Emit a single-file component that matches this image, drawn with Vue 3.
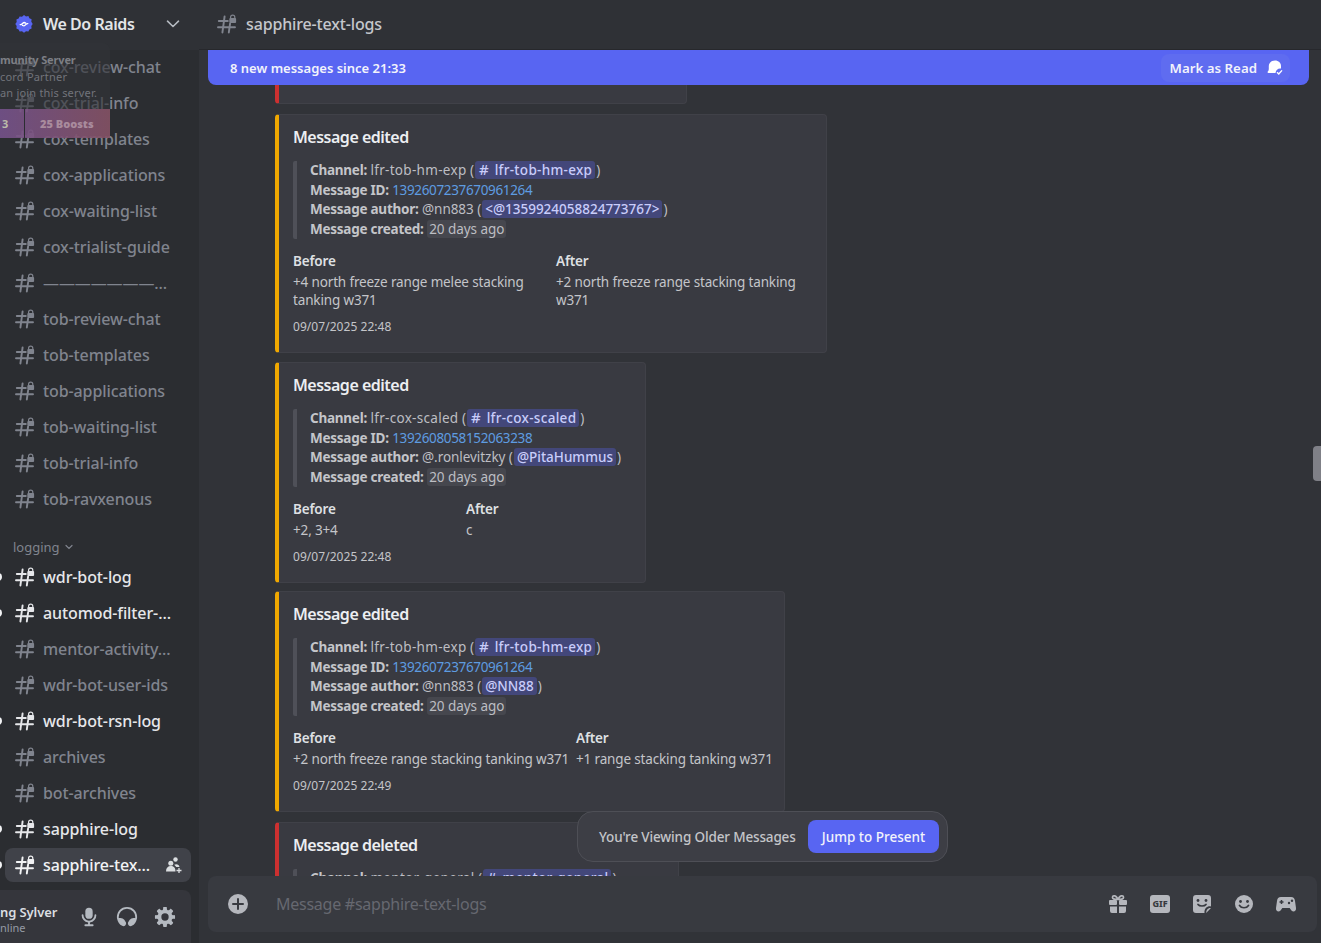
<script setup>
const channels = [
  { name: 'cox-review-chat' }, { name: 'cox-trial-info' }, { name: 'cox-templates' },
  { name: 'cox-applications' }, { name: 'cox-waiting-list' }, { name: 'cox-trialist-guide' },
  { name: '———————...' }, { name: 'tob-review-chat' }, { name: 'tob-templates' },
  { name: 'tob-applications' }, { name: 'tob-waiting-list' }, { name: 'tob-trial-info' },
  { name: 'tob-ravxenous' },
]
const logging = [
  { name: 'wdr-bot-log', unread: true },
  { name: 'automod-filter-...', unread: true },
  { name: 'mentor-activity...' },
  { name: 'wdr-bot-user-ids' },
  { name: 'wdr-bot-rsn-log', unread: true },
  { name: 'archives' },
  { name: 'bot-archives' },
  { name: 'sapphire-log', unread: true },
  { name: 'sapphire-tex...', unread: true, active: true },
]
const cards = [
  {
    gap: 10, width: 552, col: 263, channel: 'lfr-tob-hm-exp', id: '1392607237670961264', author: '@nn883',
    mention: '<@1359924058824773767>', before: '+4 north freeze range melee stacking tanking w371',
    after: '+2 north freeze range stacking tanking w371', time: '09/07/2025 22:48',
  },
  {
    gap: 9, width: 371, col: 173, channel: 'lfr-cox-scaled', id: '1392608058152063238', author: '@.ronlevitzky',
    mention: '@PitaHummus', before: '+2, 3+4', after: 'c', time: '09/07/2025 22:48',
  },
  {
    gap: 8, width: 510, col: 283, channel: 'lfr-tob-hm-exp', id: '1392607237670961264', author: '@nn883',
    mention: '@NN88', before: '+2 north freeze range stacking tanking w371',
    after: '+1 range stacking tanking w371', time: '09/07/2025 22:49',
  },
]
</script>

<template>
  <svg class="defs" width="0" height="0" aria-hidden="true">
    <symbol id="lockhash" viewBox="0 0 24 24">
      <path d="M9.600 4.500 7.400 20.500M15.100 11.500 13.800 20.500M3.800 9H12.800M3 15.300H20" fill="none" stroke="currentColor" stroke-width="1.900" stroke-linecap="round" />
      <path d="M15.600 6.500V5.300a2.100 2.100 0 0 1 4.200 0v1.200" fill="none" stroke="currentColor" stroke-width="1.200" />
      <rect x="14.300" y="6" width="6.800" height="5" rx="1" fill="currentColor" />
    </symbol>
  </svg>

  <div class="app">
    <aside class="side">
      <header class="guild">
        <svg class="badge" width="18" height="18" viewBox="0 0 18 18">
          <path fill="#5865f2" d="M9 0l2 1.400 2.400-.3 1 2.200 2.200 1-.3 2.400L17.700 9l-1.400 2 .3 2.400-2.200 1-1 2.200-2.400-.3L9 17.700l-2-1.400-2.400.3-1-2.200-2.200-1 .3-2.400L.3 9l1.400-2-.3-2.400 2.200-1 1-2.200 2.400.3z" />
          <path d="M5.200 9.600c1.500.6 2.600-2 4-2.100 1 0 1.200.5 1.400.6M7.400 10.300c.6.300 1 .6 1.600.5 1.400-.2 2.400-2.600 3.800-2.200" fill="none" stroke="#fff" stroke-width="1.300" stroke-linecap="round" />
        </svg>
        <span class="guild-name">We Do Raids</span>
        <svg class="chev" width="14" height="14" viewBox="0 0 14 14"><path d="M1.500 4.200 7 9.500l5.500-5.300" fill="none" stroke="currentColor" stroke-width="1.600" stroke-linecap="round" stroke-linejoin="round" /></svg>
      </header>

      <nav class="list">
        <div v-for="c in channels" :key="c.name" class="chan">
          <svg class="hash" width="24" height="24"><use href="#lockhash" /></svg>
          <span>{{ c.name }}</span>
        </div>
        <div class="cat">logging
          <svg width="10" height="10" viewBox="0 0 10 10"><path d="M2 3.500 5 6.500l3-3" fill="none" stroke="currentColor" stroke-width="1.200" stroke-linecap="round" /></svg>
        </div>
        <div v-for="c in logging" :key="c.name" class="chan" :class="{ unread: c.unread, active: c.active }">
          <i v-if="c.unread" class="pip"></i>
          <svg class="hash" width="24" height="24"><use href="#lockhash" /></svg>
          <span class="grow">{{ c.name }}</span>
          <svg v-if="c.active" class="invite" width="18" height="18" viewBox="0 0 18 18">
            <circle cx="10.500" cy="3.500" r="2.200" fill="currentColor" />
            <circle cx="5.800" cy="7.300" r="2.500" fill="currentColor" />
            <path fill="currentColor" d="M1 15.500c0-3.500 2-5.400 4.800-5.400s4.700 1.600 4.700 5.400zM9.200 8.800c2.400-1.300 5-.3 5.300 2.200h-3.200z" />
            <path d="M14 12v5M11.500 14.500h5" stroke="currentColor" stroke-width="1.300" />
          </svg>
        </div>
      </nav>

      <div class="user">
        <div class="who">
          <b>ng Sylver</b>
          <small>nline</small>
        </div>
        <svg class="ctl" width="22" height="22" viewBox="0 0 24 24"><path fill="currentColor" d="M12 2a4 4 0 0 0-4 4v4a4 4 0 0 0 8 0V6a4 4 0 0 0-4-4Z" /><path fill="currentColor" d="M6 10a1 1 0 0 0-2 0 8 8 0 0 0 7 7.930V20H8a1 1 0 1 0 0 2h8a1 1 0 1 0 0-2h-3v-2.070A8 8 0 0 0 20 10a1 1 0 1 0-2 0 6 6 0 0 1-12 0Z" /></svg>
        <svg class="ctl" width="22" height="22" viewBox="0 0 24 24"><path fill="currentColor" d="M12 3a9 9 0 0 0-8.950 10h1.870a5 5 0 0 1 4.100 2.130l1.370 1.970a3.100 3.100 0 0 1-.17 3.780 2.850 2.850 0 0 1-3.550.74 11 11 0 1 1 10.660 0c-1.270.71-2.730.23-3.550-.74a3.100 3.100 0 0 1-.17-3.780l1.380-1.970a5 5 0 0 1 4.100-2.130h1.860A9 9 0 0 0 12 3Z" /></svg>
        <svg class="ctl" width="22" height="22" viewBox="0 0 24 24"><path fill="currentColor" fill-rule="evenodd" d="M10.560 1.100c-.46.05-.7.53-.64.98.18 1.160-.19 2.200-.98 2.530-.8.33-1.790-.15-2.490-1.100-.27-.36-.78-.52-1.140-.24-.77.59-1.450 1.270-2.040 2.040-.28.36-.12.87.24 1.140.96.7 1.430 1.700 1.100 2.490-.33.8-1.370 1.160-2.530.98-.45-.07-.93.18-.99.64a11.100 11.100 0 0 0 0 2.880c.06.46.54.7.99.64 1.160-.18 2.200.19 2.530.98.33.8-.14 1.790-1.100 2.490-.36.27-.52.78-.24 1.140.59.77 1.270 1.450 2.040 2.040.36.28.87.12 1.140-.24.7-.95 1.700-1.430 2.490-1.100.8.33 1.160 1.370.98 2.530-.07.45.18.93.64.99a11.100 11.100 0 0 0 2.880 0c.46-.06.7-.54.64-.99-.18-1.160.19-2.200.98-2.530.8-.33 1.790.14 2.490 1.100.27.36.78.52 1.140.24.77-.59 1.450-1.270 2.040-2.040.28-.36.12-.87-.24-1.140-.96-.7-1.430-1.700-1.100-2.490.33-.8 1.370-1.160 2.530-.98.45.07.93-.18.99-.64a11.100 11.100 0 0 0 0-2.880c-.06-.46-.54-.7-.99-.64-1.160.18-2.200-.19-2.530-.98-.33-.8.14-1.790 1.100-2.490.36-.27.52-.78.24-1.140a11.070 11.070 0 0 0-2.040-2.040c-.36-.28-.87-.12-1.140.24-.7.96-1.700 1.430-2.490 1.100-.8-.33-1.160-1.370-.98-2.530.07-.45-.18-.93-.64-.99a11.100 11.100 0 0 0-2.880 0ZM16 12a4 4 0 1 1-8 0 4 4 0 0 1 8 0Z" /></svg>
      </div>

      <div class="pop">
        <div class="pop-text">
          <b>munity Server</b>
          <span>cord Partner</span>
          <span>an join this server.</span>
        </div>
        <div class="boost"><span class="lvl">3</span><b>25 Boosts</b></div>
      </div>
    </aside>

    <main class="main">
      <header class="top">
        <svg class="top-hash" width="24" height="24"><use href="#lockhash" /></svg>
        <span>sapphire-text-logs</span>
      </header>

      <section class="log">
        <div class="banner">
          <span>8 new messages since 21:33</span>
          <button class="read">Mark as Read
            <svg width="18" height="18" viewBox="0 0 18 18">
              <path fill="#fff" d="M9 1.500c3.600 0 6 2.400 6 5.500v2.500c-2.700-.5-5 1-5.500 4.500H2.500c-.9 0-1.200-.8-.7-1.400.7-.7 1-1.500 1-2.600V7C2.800 3.900 5.400 1.500 9 1.500z" />
              <path d="M11 13.200l1.800 1.800 3.200-3.600" fill="none" stroke="#fff" stroke-width="1.400" />
            </svg>
          </button>
        </div>

        <div class="stream">
          <article class="card red stub"></article>
          <article v-for="(c, i) in cards" :key="i" class="card" :style="{ width: c.width + 'px', marginTop: c.gap + 'px' }">
            <h3>Message edited</h3>
            <blockquote>
              <div><b>Channel:</b> <span class="cname">{{ c.channel }}</span> (<span class="men"><i class="mhash">#</i><span class="cname">{{ c.channel }}</span></span>)</div>
              <div><b>Message ID:</b> <a>{{ c.id }}</a></div>
              <div><b>Message author:</b> {{ c.author }} (<span class="men">{{ c.mention }}</span>)</div>
              <div><b>Message created:</b> <span class="ago">20 days ago</span></div>
            </blockquote>
            <div class="fields">
              <div :style="{ width: c.col + 'px' }">
                <b>Before</b>
                <p>{{ c.before }}</p>
              </div>
              <div class="after">
                <b>After</b>
                <p>{{ c.after }}</p>
              </div>
            </div>
            <time>{{ c.time }}</time>
          </article>
          <article class="card red last">
            <h3>Message deleted</h3>
            <blockquote>
              <div><b>Channel:</b> <span class="cname">mentor-general</span> (<span class="men"><i class="mhash">#</i><span class="cname">mentor-general</span></span>)</div>
            </blockquote>
          </article>
        </div>

        <div class="jump">
          <span>You're Viewing Older Messages</span>
          <button>Jump to Present</button>
        </div>

        <div class="thumb"></div>
      </section>

      <footer class="composer">
        <div class="inputbar">
          <svg class="plus" width="24" height="24" viewBox="0 0 24 24">
            <circle cx="12" cy="12" r="10" fill="#b5b7bd" />
            <path d="M12 7v10M7 12h10" stroke="#383a40" stroke-width="2" stroke-linecap="round" />
          </svg>
          <span class="ph">Message #sapphire-text-logs</span>
          <div class="tools">
            <svg width="24" height="24" viewBox="0 0 24 24"><g fill="#b5b7bd"><rect x="3" y="8" width="8" height="5" rx="1" /><rect x="13" y="8" width="8" height="5" rx="1" /><path d="M4 14.500h7V21H6a2 2 0 0 1-2-2zM13 14.500h7V19a2 2 0 0 1-2 2h-5z" /></g><path d="M12 7.500C10.500 3 6.500 2.800 6.500 5.500c0 1.500 2 2 5.500 2zM12 7.500c1.500-4.500 5.500-4.700 5.500-2 0 1.500-2 2-5.500 2z" fill="none" stroke="#b5b7bd" stroke-width="1.700" /></svg>
            <span class="gif">GIF</span>
            <svg width="24" height="24" viewBox="0 0 24 24"><path fill="#b5b7bd" d="M6 3h12a3 3 0 0 1 3 3v8.500c-3.500-.8-7 2-6.500 6.500H6a3 3 0 0 1-3-3V6a3 3 0 0 1 3-3z" /><path fill="#b5b7bd" d="M21 16c-2.700-.5-5 1.800-4.800 5z" /><circle cx="8" cy="8.500" r="1.400" fill="#383a40" /><circle cx="16" cy="8.500" r="1.400" fill="#383a40" /><path d="M8 12.500c1.500 2 6.500 2 8 0" fill="none" stroke="#383a40" stroke-width="1.700" stroke-linecap="round" /></svg>
            <svg width="24" height="24" viewBox="0 0 24 24"><circle cx="12" cy="12" r="9" fill="#b5b7bd" /><circle cx="8.500" cy="9.500" r="1.400" fill="#383a40" /><circle cx="15.500" cy="9.500" r="1.400" fill="#383a40" /><path d="M7.500 13.500c2 3 7 3 9 0" fill="none" stroke="#383a40" stroke-width="1.700" stroke-linecap="round" /></svg>
            <svg width="24" height="24" viewBox="0 0 24 24"><path fill="#b5b7bd" d="M7 5h10c2.500 0 3.700 1.500 4 4l1 7c.3 2.300-1 3.500-2.500 3.500-1.200 0-2-.7-2.800-2l-1-1.500H8.300l-1 1.500c-.8 1.300-1.600 2-2.800 2C3 19.500 1.700 18.300 2 16l1-7c.3-2.500 1.500-4 4-4z" /><path d="M7.500 8v4M5.500 10h4" stroke="#383a40" stroke-width="1.500" /><circle cx="15" cy="11" r="1.200" fill="#383a40" /><circle cx="18" cy="8.800" r="1.200" fill="#383a40" /></svg>
          </div>
        </div>
      </footer>
    </main>
  </div>
</template>

<style>
html, body { margin: 0; background: #313338; overflow: hidden; }
</style>

<style scoped>
.defs { position: absolute; }
.app {
  display: flex;
  width: 1321px;
  height: 943px;
  overflow: hidden;
  font-family: "Noto Sans", "Open Sans", sans-serif;
  background: #313338;
  color: #dbdee1;
}

/* sidebar */
.side {
  position: relative;
  flex: 0 0 199px;
  display: flex;
  flex-direction: column;
  background: #2b2d31;
  overflow: hidden;
}
.guild {
  flex: 0 0 50px;
  box-sizing: border-box;
  display: flex;
  align-items: center;
  padding: 0 0 2px 15px;
  background: #2f3136;
}
.guild-name {
  margin-left: 10px;
  width: 124px;
  font-size: 16px;
  font-weight: 600;
  letter-spacing: -.45px;
  color: #e3e5e8;
}
.chev { color: #b5bac1; margin-left: -1px; }
.list { flex: 1; padding-top: 0; min-height: 0; }
.chan {
  position: relative;
  display: flex;
  align-items: center;
  height: 34px;
  margin: 0 8px 2px 5px;
  padding: 0 8px 0 8px;
  border-radius: 8px;
  font-size: 16px;
  font-weight: 500;
  letter-spacing: -.1px;
  color: #80848e;
}
.chan .hash { flex: none; margin-right: 6px; }
.chan .grow { flex: 1; }
.chan.unread { color: #e6e7ea; }
.chan.active { background: #404249; color: #f2f3f5; }
.pip {
  position: absolute;
  left: -9px;
  top: 13px;
  width: 6px;
  height: 8px;
  border-radius: 0 4px 4px 0;
  background: #f2f3f5;
}
.invite { color: #dbdee1; }
.cat {
  display: flex;
  align-items: center;
  gap: 4px;
  height: 27px;
  margin-top: 17px;
  padding-left: 13px;
  font-size: 13px;
  color: #80848e;
}
.user {
  flex: 0 0 53px;
  display: flex;
  align-items: center;
  margin-right: 8px;
  padding-right: 15px;
  background: #35363c;
  border-radius: 0 8px 0 0;
  gap: 16px;
}
.who { flex: 1; display: flex; flex-direction: column; margin-top: 4px; }
.who b { font-size: 13px; font-weight: 600; color: #dbdee1; line-height: 18px; letter-spacing: -.1px; }
.who small { font-size: 11px; color: #949ba4; line-height: 14px; }
.ctl { color: #b5bac1; }
.pop {
  position: absolute;
  left: -10px;
  top: 43px;
  width: 120px;
  height: 95px;
  display: flex;
  flex-direction: column;
  justify-content: space-between;
  box-sizing: border-box;
  border-radius: 0 8px 0 0;
  background: rgba(50, 51, 57, .62);
  color: #72747b;
  font-size: 11px;
  overflow: hidden;
}
.pop-text {
  display: flex;
  flex-direction: column;
  padding: 9px 0 0 10px;
  line-height: 16.500px;
}
.pop-text b { color: #7d7f85; font-weight: 700; letter-spacing: -.15px; }
.pop-text span { letter-spacing: .2px; }
.boost {
  position: relative;
  display: flex;
  align-items: center;
  height: 29px;
  padding-left: 12px;
  background: linear-gradient(90deg, rgba(128, 88, 160, .75), rgba(150, 88, 110, .75));
  color: #a98b9d;
  font-weight: 700;
}
.lvl { width: 38px; color: #bba; }
.boost::after {
  content: "";
  position: absolute;
  left: 34px;
  top: 0;
  bottom: 0;
  width: 1px;
  background: #2b2d31;
}

/* main */
.main { flex: 1; min-width: 0; display: flex; flex-direction: column; }
.top {
  flex: 0 0 49px;
  box-sizing: content-box;
  display: flex;
  align-items: center;
  padding-left: 16px;
  border-bottom: 1px solid #27282c;
  background: #2f3136;
  font-size: 16px;
  font-weight: 500;
  letter-spacing: -.15px;
  color: #c5c7cc;
}
.top span { margin-bottom: 2px; }
.top-hash { color: #80848e; margin: 0 7px 2px 0; flex: none; }
.log { position: relative; flex: 1; min-height: 0; overflow: hidden; }
.banner {
  position: absolute;
  z-index: 3;
  top: 0;
  left: 9px;
  right: 12px;
  height: 35px;
  box-sizing: border-box;
  display: flex;
  align-items: center;
  justify-content: space-between;
  padding: 0 19px 0 22px;
  background: #5865f2;
  border-radius: 0 0 8px 8px;
  color: #f2f3fb;
  font-size: 13px;
  font-weight: 600;
}
.read {
  display: flex;
  align-items: center;
  gap: 9px;
  height: 28px;
  padding: 0 6px 0 9px;
  border: 0;
  border-radius: 8px;
  background: #5f6cf0;
  color: #f2f3fb;
  font: inherit;
  font-size: 13.300px;
}
.stream { padding-left: 76px; }
.card {
  box-sizing: border-box;
  padding: 11px 8px 16px 14px;
  background: #393a41;
  border: 1px solid #404148;
  border-left: 4px solid #f0a800;
  border-radius: 4px;
}
.card.stub { width: 412px; height: 54px; padding: 0; border-top: 0; border-radius: 0 0 4px 4px; }
.red { border-left-color: #cc3030 !important; }
.card.last { width: 404px; margin-top: 10px; height: 200px; }
h3 {
  margin: 0;
  font-size: 16px;
  line-height: 22px;
  font-weight: 600;
  letter-spacing: -.5px;
  color: #eceef1;
}
blockquote {
  margin: 13px 0 13px;
  padding-left: 13px;
  border-left: 4px solid #4f5058;
  border-radius: 2px;
  font-size: 13.500px;
  line-height: 19.500px;
  letter-spacing: -.05px;
  color: #bdbec3;
  white-space: nowrap;
}
blockquote > div { height: 19.500px; }
blockquote b { font-weight: 700; color: #c4c5c9; letter-spacing: -.25px; }
a { color: #5e9ce0; letter-spacing: -.35px; }
.cname { letter-spacing: .3px; }
.men {
  margin: 0 1px;
  padding: 0 3px;
  border-radius: 3px;
  background: #43477a;
  color: #c9cdfb;
  font-weight: 500;
  letter-spacing: 0;
}
.mhash {
  font-style: normal;
  font-size: 15px;
  line-height: 1;
  margin: 0 6px 0 1px;
}
.ago { padding: 0 2px; border-radius: 3px; background: #46474e; }
.fields { display: flex; font-size: 13.500px; line-height: 18px; letter-spacing: -.15px; color: #c4c5c9; }
.fields > div { flex: none; }
.fields > .after { flex: 1; }
.fields b { display: block; font-weight: 600; color: #dfe0e3; }
.fields p { margin: 3px 0 0 0; }
time {
  display: block;
  margin-top: 9px;
  font-size: 12px;
  line-height: 18px;
  letter-spacing: .05px;
  color: #c4c5c9;
}
.jump {
  position: absolute;
  z-index: 2;
  left: 378px;
  top: 761px;
  width: 371px;
  height: 51px;
  box-sizing: border-box;
  display: flex;
  align-items: center;
  justify-content: space-between;
  padding: 0 8px 0 21px;
  border: 1px solid #4e4f56;
  border-radius: 16px;
  background: #3d3e45;
  color: #c4c5c9;
  font-size: 13.500px;
  font-weight: 500;
  letter-spacing: -.15px;
}
.jump button {
  width: 131px;
  height: 33px;
  border: 0;
  border-radius: 8px;
  background: #5865f2;
  color: #f2f3fb;
  font: inherit;
  padding: 0;
}
.thumb {
  position: absolute;
  right: 0;
  top: 396px;
  width: 8px;
  height: 35px;
  border-radius: 4px 0 0 4px;
  background: #7f8087;
}
.composer { flex: 0 0 67px; padding: 0 4px 11px 9px; box-sizing: border-box; }
.inputbar {
  height: 56px;
  display: flex;
  align-items: center;
  padding: 0 19px 0 18px;
  background: #383a40;
  border-radius: 8px;
}
.plus { flex: none; }
.ph { flex: 1; margin-left: 26px; font-size: 16px; color: #666870; letter-spacing: -.25px; }
.tools { display: flex; align-items: center; gap: 18px; }
.gif {
  width: 20px;
  height: 18px;
  margin: 0 2px;
  border-radius: 3px;
  background: #b5b7bd;
  color: #383a40;
  font-size: 9px;
  font-weight: 800;
  line-height: 18px;
  text-align: center;
}
</style>
